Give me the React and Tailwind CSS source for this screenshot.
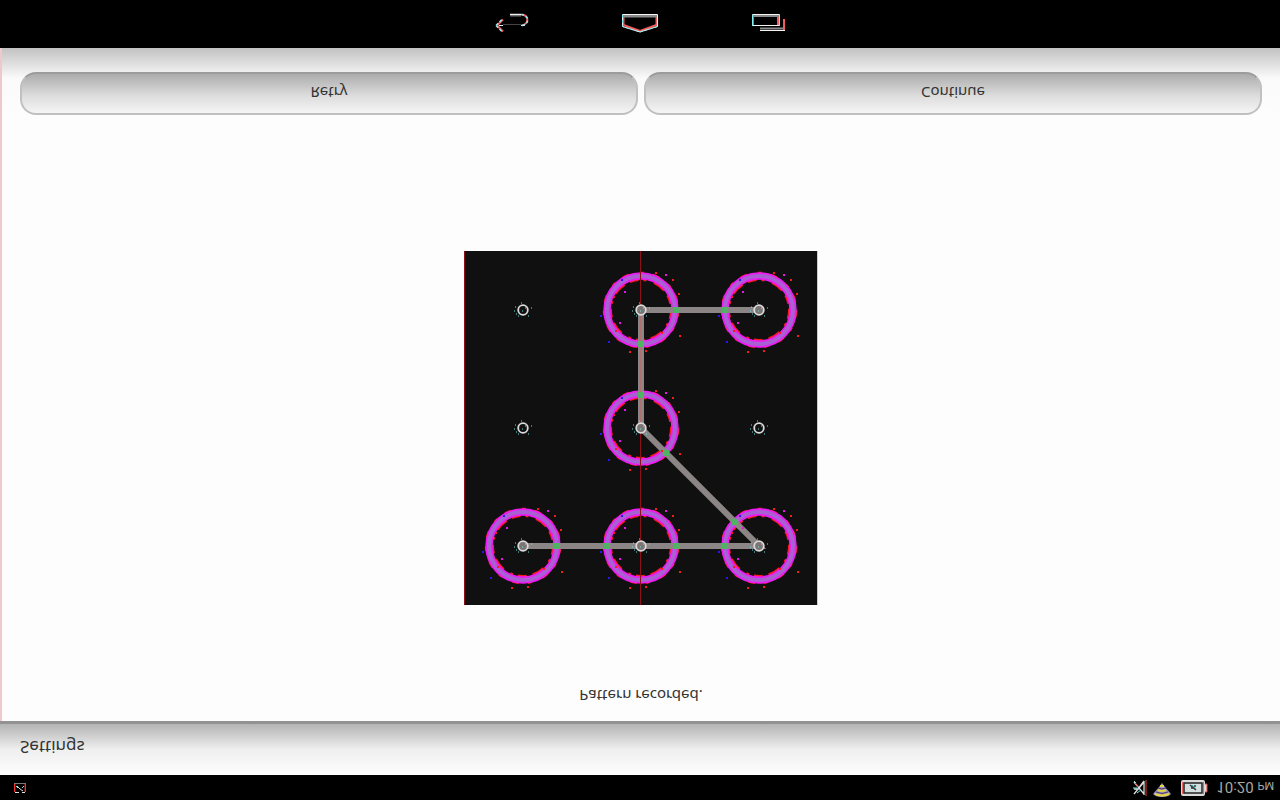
import React from "react";

const dots = [
  { x: 59, y: 59, on: false },
  { x: 177, y: 59, on: true },
  { x: 295, y: 59, on: true },
  { x: 59, y: 177, on: false },
  { x: 177, y: 177, on: true },
  { x: 295, y: 177, on: false },
  { x: 59, y: 295, on: true },
  { x: 177, y: 295, on: true },
  { x: 295, y: 295, on: true },
];

// where the path crosses a ring
const crossings = [
  [213, 59], [261, 59], [177, 93], [177, 144], [202, 202],
  [271, 271], [93, 295], [143, 295], [213, 295], [261, 295],
];

const specks = [
  [37, -17, "#f51b1b"], [-28, -14, "#f51b1b"], [-17, -19, "#e815e8"], [14, -38, "#f51b1b"],
  [-12, 41, "#f51b1b"], [38, 25, "#f51b1b"], [-26, 20, "#f51b1b"], [20, 22, "#f51b1b"],
  [-41, 5, "#2a16f0"], [-20, -31, "#2a16f0"], [4, 40, "#f51b1b"], [24, -36, "#e815e8"],
  [-22, 12, "#e815e8"], [31, -31, "#f51b1b"], [-33, 31, "#2a16f0"],
];

const Dot = ({ x, y, on }) => (
  <g transform={`translate(${x} ${y})`}>
    {on && specks.map(([sx, sy, fill]) => (
      <rect key={`${sx},${sy}`} x={sx} y={sy} width="2" height="2" fill={fill} />
    ))}
    <circle r="4.800" fill={on ? "#7d7474" : "#111"} stroke="#dadada" strokeWidth="1.800" />
    <path d="M-8-3h1M-7 4h1M-2-7h1M-5 6h1M5 6h1M8-2h1M-9 1h1M-1 1h1M2-2h1" stroke="#65e5e8" strokeWidth="1" />
  </g>
);

const PatternGrid = () => (
  <svg width="354" height="354" viewBox="0 0 354 354" role="img" aria-label="Unlock pattern" className="shrink-0">
    <rect width="354" height="354" fill="#101010" />
    <path d="M.5 0V354" stroke="#8b1018" />
    <path d="M353.5 0V354" stroke="#8fe8ec" />
    {dots.filter((d) => d.on).map((d) => (
      <g key={`${d.x}-${d.y}`} fill="none" transform={`translate(${d.x} ${d.y})`}>
        <circle r="30.500" stroke="#f51b1b" strokeWidth="3" strokeDasharray="9 5 3 8 13 6" />
        <circle r="37" stroke="#f51b1b" strokeWidth="2.500" strokeDasharray="7 11 4 9" />
        <circle r="34" stroke="#ed1cf0" strokeWidth="7.500" />
        <circle r="34" stroke="#a861d2" strokeWidth="4" />
      </g>
    ))}
    <path d="M176.500 0V354" stroke="#8b1018" />
    <path d="M59 295H295L177 177V59H295" fill="none" stroke="#8c8585" strokeWidth="6" />
    <path d="M176.500 59V177" stroke="#b07070" />
    {crossings.map(([x, y]) => (
      <rect key={`${x}-${y}`} x={x - 3} y={y - 3} width="6" height="6" fill="#50b364" />
    ))}
    {dots.map((d) => <Dot key={`${d.x}-${d.y}`} {...d} />)}
  </svg>
);

const BackIcon = () => (
  <svg width="36" height="24" viewBox="0 0 36 24" fill="none">
    <path d="M16 5H27" stroke="#737373" strokeWidth="3" />
    <path d="M28 4.500C36 6 34 14 28 15.500M3 15.500l6-6M3 15.500l6 6" stroke="#f05c5c" strokeWidth="2" />
    <path d="M16 4.500H28M5 15.500H9M27 15.500H31" stroke="#eee" />
    <path d="M9 14.500H28" stroke="#444" />
    <path d="M27 4.500C37 6 35 15 27 15.500M2 15.500l6-6M2 15.500l6 6" stroke="#8ef0f0" strokeWidth="1.500" strokeDasharray="3 2" />
  </svg>
);

const HomeIcon = () => (
  <svg width="38" height="24" viewBox="0 0 38 24" fill="none">
    <path d="M2.500 5V15L19 21 35.500 15V5" stroke="#f05c5c" strokeWidth="2" />
    <path d="M2 6H36" stroke="#8a8a8a" strokeWidth="3" />
    <path d="M1.500 4.500H36.500V16.500L19 22 1.500 16.500Z" stroke="#f4f4f4" />
    <path d="M1.500 5V16.500L19 22 36.500 16.500" stroke="#7eeeee" strokeDasharray="3 2" />
  </svg>
);

const RecentIcon = () => (
  <svg width="36" height="24" viewBox="0 0 36 24" fill="none">
    <path d="M3 5V16M28 5V16M34 9V21" stroke="#f05c5c" strokeWidth="2" />
    <path d="M2 6H29M10 18.500H33" stroke="#8a8a8a" strokeWidth="2" />
    <path d="M2.500 4.500H29.500V15.500H2.500ZM10 20.500H35" stroke="#f4f4f4" />
    <path d="M2.500 5V16M29.500 5V16" stroke="#7eeeee" />
  </svg>
);

const MuteIcon = () => (
  <svg width="16" height="18" viewBox="0 0 16 18" fill="none">
    <path d="M2 3l10 12M2 10h4l6-8M2 15L12 3M12 2V16" stroke="#dcdcdc" strokeWidth="1.300" />
    <path d="M14 1V17M3 4l3 4" stroke="#ec3d3d" />
    <path d="M1 9h4M2 2l2 2M5 14l4-3" stroke="#6fe9ec" />
  </svg>
);

const SignalIcon = () => (
  <svg width="20" height="16" viewBox="0 0 20 16" fill="none" className="mt-1">
    <path d="M10 1L13 5 19 12C16 16 4 16 1 12L7 5Z" fill="#9a8fc8" />
    <path d="M8 4h4M6 8q4 2 8 0M3 12q7 3 14 0" stroke="#e4d540" strokeWidth="2" />
    <path d="M6 6q4 2 8 0M4 10q6 3 12 0" stroke="#4d3c60" />
  </svg>
);

const BatteryIcon = () => (
  <svg width="28" height="18" viewBox="0 0 28 18" fill="none">
    <rect x="1" y="1" width="24" height="16" rx="2" fill="#d9d9d9" />
    <path d="M25 5h2v8h-2" fill="#ddd" stroke="#ed3d3d" />
    <rect x="4" y="4" width="18" height="10" fill="#d3dfdf" stroke="#222" strokeWidth="1.500" />
    <path d="M2.500 3V15M23.500 3V15" stroke="#e86464" />
    <path d="M10 6l6 5M11 9h2M14 7h2" stroke="#333" strokeWidth="1.500" />
    <path d="M12 6l4 4" stroke="#28b9c0" />
  </svg>
);

const MailIcon = () => (
  <svg width="12" height="10" viewBox="0 0 12 10" fill="none">
    <path d="M0 .500H12" stroke="#777" />
    <path d="M.700 1V9M11.300 1V9" stroke="#ef3232" strokeWidth="1.400" />
    <path d="M3 3l3 3 3 2M1 9.500H5M8 9.500h3" stroke="#ddd" />
    <path d="M2 3l2 2M8 5l2-2" stroke="#6fe9ec" />
  </svg>
);

const navItems = [
  { label: "Back", Icon: BackIcon },
  { label: "Home", Icon: HomeIcon },
  { label: "Recent apps", Icon: RecentIcon },
];

const App = () => {
  return (
    <div className="min-h-screen flex flex-col bg-[#fdfdfd] text-[#333] font-['Noto_Sans',sans-serif] text-[15px] leading-6">
      <nav className="h-12 bg-black flex justify-center">
        {navItems.map(({ label, Icon }) => (
          <button key={label} aria-label={label} className="w-32 flex justify-center pt-[10px]">
            <Icon />
          </button>
        ))}
      </nav>

      <main className="flex-1 flex flex-col border-l-2 border-[#efc9c9]">
        <div className="bg-linear-to-b from-[#c2c2c2] via-[#fafafa] via-45% to-[#fdfdfd] pt-6 px-[18px] flex gap-[6px]">
          {["Retry", "Continue"].map((label) => (
            <button
              key={label}
              className="flex-1 h-[43px] pb-[2px] rounded-2xl border-2 border-[#c0c0c0] border-t-[#9c9c9c] bg-linear-to-b from-[#acacac] via-[#dcdcdc] via-55% to-[#f5f5f5]"
            >
              <span className="inline-block -scale-y-100">{label}</span>
            </button>
          ))}
        </div>

        <div className="flex-1 flex flex-col items-center justify-end gap-[79px] pb-[13px]">
          <PatternGrid />
          <p className="-scale-y-100">Pattern recorded.</p>
        </div>
      </main>

      <header className="h-[54px] border-t-3 border-[#929292] bg-linear-to-b from-[#b4b4b4] via-[#efefef] via-50% to-[#fdfdfd] pl-5 pb-[6px] flex items-center">
        <h1 className="-scale-y-100 text-[17px]">Settings</h1>
      </header>

      <footer className="h-[25px] bg-black flex items-center justify-between pl-[14px] pr-[6px]">
        <MailIcon />
        <div className="flex items-center gap-2">
          <div className="flex items-center gap-1">
            <MuteIcon />
            <SignalIcon />
          </div>
          <BatteryIcon />
          <time className="-scale-y-100 font-[Roboto,sans-serif] text-[15px] leading-6 text-[#aaa9a0] pt-1">
            10:20 <span className="text-[11px]">PM</span>
          </time>
        </div>
      </footer>
    </div>
  );
};

export default App;
